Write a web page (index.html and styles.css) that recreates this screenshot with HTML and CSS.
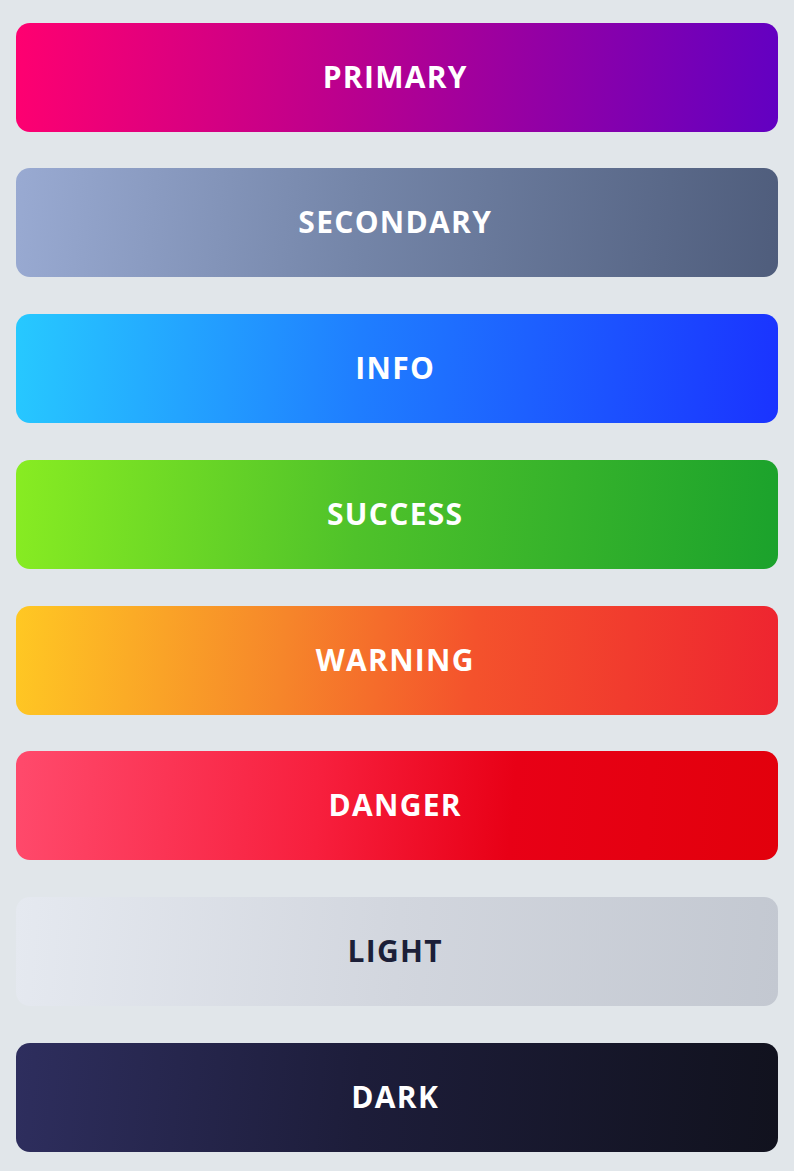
FILE: index.html
```html
<!DOCTYPE html>
<html lang="en">
<head>
<meta charset="utf-8">
<title>Buttons</title>
<link rel="stylesheet" href="styles.css">
</head>
<body>
<div class="stack">
  <button class="btn btn-primary">PRIMARY</button>
  <button class="btn btn-secondary">SECONDARY</button>
  <button class="btn btn-info">INFO</button>
  <button class="btn btn-success">SUCCESS</button>
  <button class="btn btn-warning">WARNING</button>
  <button class="btn btn-danger">DANGER</button>
  <button class="btn btn-light">LIGHT</button>
  <button class="btn btn-dark">DARK</button>
</div>
</body>
</html>
```
FILE: styles.css
```css
html, body {
  margin: 0;
  padding: 0;
  background: #e1e6ea;
}
.stack {
  display: flex;
  flex-direction: column;
  gap: 36.8px;
  padding: 22.5px 16px 0 15.5px;
}
.btn {
  display: flex;
  align-items: center;
  justify-content: center;
  height: 109px;
  width: 100%;
  border: none;
  border-radius: 14px;
  font-family: "Open Sans", "Noto Sans", sans-serif;
  font-weight: 700;
  font-size: 30px;
  letter-spacing: 1.3px;
  color: #ffffff;
  padding: 0 3px 2px 0;
  margin: 0;
}
.btn-primary { background: linear-gradient(95deg, #ff0070 0%, #b8008f 45%, #6200c2 100%); }
.btn-secondary { background: linear-gradient(95deg, #99aad2 0%, #7485a8 45%, #4f5d7c 100%); }
.btn-info { background: linear-gradient(95deg, #27c9ff 0%, #1f7eff 45%, #1a33ff 100%); }
.btn-success { background: linear-gradient(95deg, #88ec22 0%, #4fc22a 45%, #1ba22c 100%); }
.btn-warning { background: linear-gradient(95deg, #ffc823 0%, #f6862a 35%, #f4522c 60%, #ee2430 100%); }
.btn-danger { background: linear-gradient(95deg, #ff4a6c 0%, #f71f3d 40%, #e80016 65%, #e2000c 100%); }
.btn-light { background: linear-gradient(95deg, #e5e9f0 0%, #d2d6de 50%, #c3c8d1 100%); color: #1c1f38; }
.btn-dark { background: linear-gradient(95deg, #2e2e5e 0%, #1d1d3a 45%, #11121e 100%); }
```
